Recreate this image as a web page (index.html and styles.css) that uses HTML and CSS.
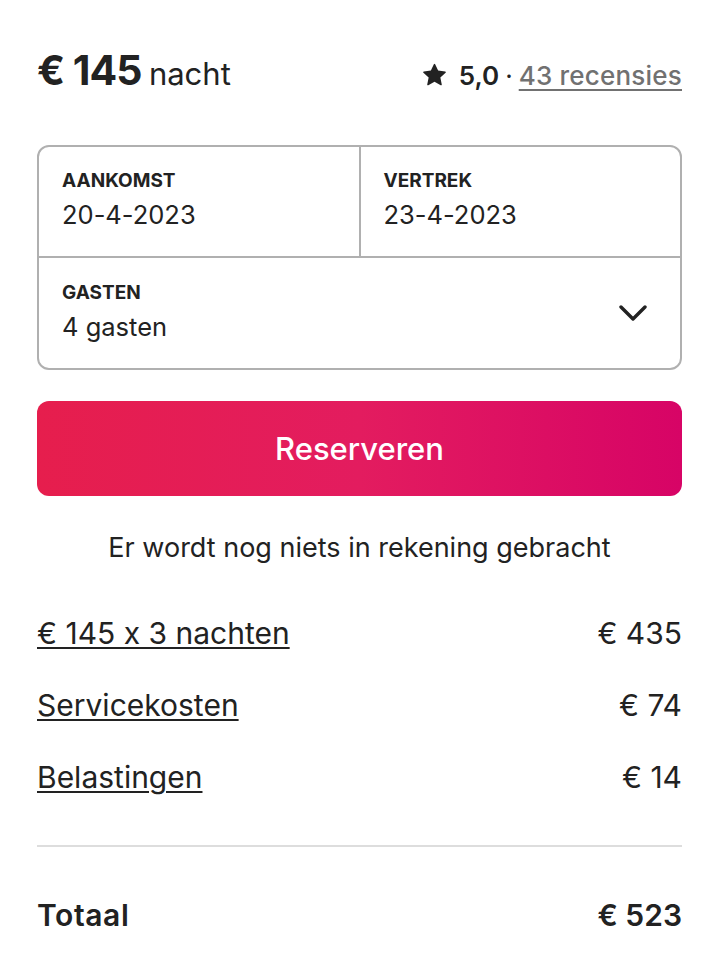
FILE: index.html
```html
<!DOCTYPE html>
<html lang="nl">
<head>
<meta charset="utf-8">
<link rel="stylesheet" href="styles.css">
</head>
<body>
<div class="card">
  <div class="header">
    <div class="price"><span class="amount">€ 145</span> <span class="unit">nacht</span></div>
    <div class="rating">
      <svg class="star" viewBox="0 0 32 32" width="23" height="23"><path d="M15.094 1.579l-4.124 8.885-9.86 1.27a1 1 0 0 0-.542 1.736l7.293 6.565-1.965 9.852a1 1 0 0 0 1.483 1.061L16 25.951l8.625 4.997a1 1 0 0 0 1.482-1.06l-1.965-9.853 7.293-6.565a1 1 0 0 0-.541-1.735l-9.86-1.271-4.127-8.885a1 1 0 0 0-1.814 0z" fill="#222"/></svg>
      <span class="score">5,0</span><span class="dot">·</span><a class="reviews" href="#">43 recensies</a>
    </div>
  </div>

  <div class="picker">
    <div class="dates">
      <div class="field">
        <div class="label">AANKOMST</div>
        <div class="value">20-4-2023</div>
      </div>
      <div class="field field-right">
        <div class="label">VERTREK</div>
        <div class="value">23-4-2023</div>
      </div>
    </div>
    <div class="guests">
      <div class="field">
        <div class="label">GASTEN</div>
        <div class="value">4 gasten</div>
      </div>
      <svg class="chevron" viewBox="0 0 28 16" width="28" height="16"><path d="M2 2l12 12L26 2" fill="none" stroke="#222" stroke-width="3.4" stroke-linecap="round" stroke-linejoin="round"/></svg>
    </div>
  </div>

  <button class="reserve">Reserveren</button>

  <p class="note">Er wordt nog niets in rekening gebracht</p>

  <div class="lines">
    <div class="line"><a href="#">€ 145 x 3 nachten</a><span>€ 435</span></div>
    <div class="line"><a href="#">Servicekosten</a><span>€ 74</span></div>
    <div class="line"><a href="#">Belastingen</a><span>€ 14</span></div>
  </div>

  <div class="total">
    <span>Totaal</span><span>€ 523</span>
  </div>
</div>
</body>
</html>
```

FILE: styles.css
```css
* { box-sizing: border-box; }
html, body { margin: 0; padding: 0; background: #fff; }
body {
  font-family: Inter, "Noto Sans", sans-serif;
  font-feature-settings: "calt" 0;
  color: #222;
  width: 720px;
  height: 964px;
  overflow: hidden;
}
.card {
  padding: 45px 38px 0 37px;
}
.header {
  display: flex;
  justify-content: space-between;
  align-items: baseline;
  height: 50px;
  line-height: 50px;
}
.amount {
  font-size: 41px;
  font-weight: 700;
  letter-spacing: -1px;
}
.unit {
  font-size: 31px;
  font-weight: 400;
  margin-left: 3px;
}
.rating {
  font-size: 26px;
  font-weight: 600;
}
.star {
  vertical-align: -1px;
  margin-right: 6px;
}
.dot { margin: 0 6px; font-weight: 400; }
.reviews {
  color: #717171;
  font-weight: 500;
  letter-spacing: 0.2px;
  text-decoration: underline;
  text-decoration-thickness: 2px;
  text-underline-offset: 4px;
}
.picker {
  margin-top: 50px;
  border: 2px solid #b0b0b0;
  border-radius: 12px;
  height: 225px;
  display: flex;
  flex-direction: column;
}
.dates {
  display: flex;
  height: 111px;
  border-bottom: 2px solid #b0b0b0;
}
.dates .field { flex: 1; }
.field { padding: 23px 23px 0; }
.field-right { border-left: 2px solid #b0b0b0; }
.guests {
  flex: 1;
  display: flex;
  justify-content: space-between;
  align-items: flex-start;
}
.guests .field { padding-top: 24px; }
.chevron { margin: 47px 33px 0 0; }
.label {
  font-size: 19px;
  font-weight: 700;
  line-height: 22px;
}
.value {
  font-size: 25.5px;
  line-height: 32px;
  margin-top: 7px;
}
.reserve {
  display: block;
  width: 100%;
  margin-top: 31px;
  height: 95px;
  border: none;
  border-radius: 12px;
  background: linear-gradient(to right, #e61e4d 0%, #e31c5f 50%, #d70466 100%);
  color: #fff;
  font-family: inherit;
  font-size: 31px;
  font-weight: 500;
  cursor: pointer;
}
.note {
  margin: 36px 0 0;
  text-align: center;
  font-size: 27px;
  line-height: 32px;
}
.lines {
  margin-top: 51px;
  display: flex;
  flex-direction: column;
  gap: 36px;
  padding-bottom: 50px;
  border-bottom: 2px solid #dddddd;
}
.line {
  display: flex;
  justify-content: space-between;
  font-size: 30px;
  line-height: 36px;
}
.line a {
  color: #222;
  text-decoration: underline;
  text-decoration-thickness: 2px;
  text-underline-offset: 3px;
}
.total {
  display: flex;
  justify-content: space-between;
  font-size: 30px;
  font-weight: 600;
  line-height: 36px;
  margin-top: 50px;
}
.total span:first-child { letter-spacing: 0.6px; }
```
